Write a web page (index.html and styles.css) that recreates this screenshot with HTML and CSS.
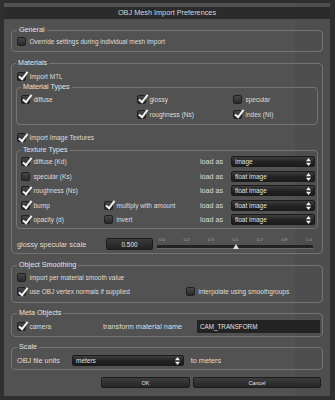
FILE: index.html
```html
<!DOCTYPE html>
<html>
<head>
<meta charset="utf-8">
<title>OBJ Mesh Import Preferences</title>
<link rel="stylesheet" href="styles.css">
</head>
<body>
<div class="dialog">
  <div class="titlebar">OBJ Mesh Import Preferences</div>
  <div class="content">
    <fieldset class="group g-general">
      <legend>General</legend>
      <div class="row"><span class="cb"><span class="box"></span>Override settings during individual mesh import</span></div>
    </fieldset>

    <fieldset class="group g-materials">
      <legend>Materials</legend>
      <div class="row inset"><span class="cb"><span class="box on"></span>Import MTL</span></div>
      <fieldset class="group sub g-mattypes">
        <legend>Material Types</legend>
        <div class="mt-grid">
          <span class="cb"><span class="box on"></span>diffuse</span>
          <span class="cb"><span class="box on"></span>glossy</span>
          <span class="cb"><span class="box"></span>specular</span>
          <span></span>
          <span class="cb"><span class="box on"></span>roughness (Ns)</span>
          <span class="cb"><span class="box on"></span>index (Ni)</span>
        </div>
      </fieldset>
      <div class="row inset import-tex"><span class="cb"><span class="box on"></span>Import Image Textures</span></div>
      <fieldset class="group sub g-textypes">
        <legend>Texture Types</legend>
        <div class="tx-row">
          <span class="cb"><span class="box on"></span>diffuse (Kd)</span><span></span>
          <span class="loadas">load as</span>
          <span class="dd">image<svg class="arr" viewBox="0 0 5 8"><polygon points="0,3.3 2.5,0 5,3.3"/><polygon points="0,4.7 2.5,8 5,4.7"/></svg></span>
        </div>
        <div class="tx-row">
          <span class="cb"><span class="box"></span>specular (Ks)</span><span></span>
          <span class="loadas">load as</span>
          <span class="dd">float image<svg class="arr" viewBox="0 0 5 8"><polygon points="0,3.3 2.5,0 5,3.3"/><polygon points="0,4.7 2.5,8 5,4.7"/></svg></span>
        </div>
        <div class="tx-row">
          <span class="cb"><span class="box on"></span>roughness (Ns)</span><span></span>
          <span class="loadas">load as</span>
          <span class="dd">float image<svg class="arr" viewBox="0 0 5 8"><polygon points="0,3.3 2.5,0 5,3.3"/><polygon points="0,4.7 2.5,8 5,4.7"/></svg></span>
        </div>
        <div class="tx-row">
          <span class="cb"><span class="box on"></span>bump</span>
          <span class="cb"><span class="box on"></span>multiply with amount</span>
          <span class="loadas">load as</span>
          <span class="dd">float image<svg class="arr" viewBox="0 0 5 8"><polygon points="0,3.3 2.5,0 5,3.3"/><polygon points="0,4.7 2.5,8 5,4.7"/></svg></span>
        </div>
        <div class="tx-row">
          <span class="cb"><span class="box on"></span>opacity (d)</span>
          <span class="cb"><span class="box"></span>invert</span>
          <span class="loadas">load as</span>
          <span class="dd">float image<svg class="arr" viewBox="0 0 5 8"><polygon points="0,3.3 2.5,0 5,3.3"/><polygon points="0,4.7 2.5,8 5,4.7"/></svg></span>
        </div>
      </fieldset>
      <div class="row inset scale-row">
        <span class="big-lbl scale-lbl">glossy specular scale</span>
        <span class="spin">0.500</span>
        <span class="slider">
          <span class="ticks"><span>0.0</span><span>0.2</span><span>0.3</span><span>0.5</span><span>0.7</span><span>0.8</span><span>1.0</span></span>
          <span class="track"></span>
          <span class="handle"></span>
        </span>
      </div>
    </fieldset>

    <fieldset class="group g-smooth">
      <legend>Object Smoothing</legend>
      <div class="sm-grid">
        <span class="cb"><span class="box"></span>import per material smooth value</span>
        <span></span>
        <span class="cb"><span class="box on"></span>use OBJ vertex normals if supplied</span>
        <span class="cb"><span class="box"></span>interpolate using smoothgroups</span>
      </div>
    </fieldset>

    <fieldset class="group g-meta">
      <legend>Meta Objects</legend>
      <div class="meta-grid">
        <span class="cb"><span class="box on"></span>camera</span>
        <span class="big-lbl">transform material name</span>
        <span class="field">CAM_TRANSFORM</span>
      </div>
    </fieldset>

    <fieldset class="group g-scale">
      <legend>Scale</legend>
      <div class="row">
        <span class="big-lbl units-lbl">OBJ file units</span>
        <span class="dd dd-units">meters<svg class="arr" viewBox="0 0 5 8"><polygon points="0,3.3 2.5,0 5,3.3"/><polygon points="0,4.7 2.5,8 5,4.7"/></svg></span>
        <span class="big-lbl">to meters</span>
      </div>
    </fieldset>

    <div class="buttons">
      <span class="btn btn-ok">OK</span>
      <span class="btn btn-cancel">Cancel</span>
    </div>
  </div>
</div>
</body>
</html>
```

FILE: styles.css
```css
* { box-sizing: border-box; }
html, body { margin: 0; padding: 0; }
body {
  width: 335px;
  height: 400px;
  overflow: hidden;
  background: #2f2f2f;
  font-family: "Liberation Sans", Arial, sans-serif;
  color: #dcdcdc;
}
.dialog {
  margin: 3px 0 0 4px;
  width: 326px;
  height: 393px;
  padding-top: 4px;
  background: linear-gradient(to right, #525252 0, #525252 291px, #4e4e4e 291px);
}
.titlebar {
  height: 12px;
  line-height: 12px;
  background: #2b2b2b;
  color: #d6d6d6;
  font-size: 7.3px;
  text-align: center;
}
.content { padding: 7px 7px 0; }

.group {
  margin: 0;
  min-width: 0;
  border: 1px solid #747474;
  border-radius: 4px;
}
.group > legend {
  padding: 0 2px;
  font-size: 7.2px;
  line-height: 8px;
  color: #e4e4e4;
}
.row { height: 14px; display: flex; align-items: center; }
.inset { padding-left: 1px; }

.cb {
  display: flex;
  align-items: center;
  font-size: 6.5px;
  white-space: nowrap;
  color: #dedede;
}
.box {
  position: relative;
  flex: none;
  width: 9px;
  height: 9px;
  margin-right: 3.5px;
  border: 1px solid #202020;
  border-radius: 2px;
  background: linear-gradient(#474747, #2a2a2a);
}
.box.on::after {
  content: "";
  position: absolute;
  left: 2.5px;
  top: -2.5px;
  width: 3px;
  height: 7.5px;
  border: solid #f2f2f2;
  border-width: 0 2px 2px 0;
  transform: rotate(38deg);
}
.big-lbl { font-size: 7.3px; white-space: nowrap; color: #dcdcdc; }

.g-general { padding: 0 5px 3px; }
.g-materials { margin-top: 7px; padding: 2px 4px 2px; }
.g-mattypes { padding: 0.5px 0 2px 4px; }
.mt-grid {
  display: grid;
  grid-template-columns: 116px 96px auto;
  grid-auto-rows: 15px;
  align-items: center;
}
.import-tex { margin-top: 6px; }
.g-textypes { margin-top: 1.5px; padding: 0.5px 2px 1px 4px; }
.tx-row {
  display: grid;
  grid-template-columns: 83px 96px 31px 84px;
  height: 14.5px;
  align-items: center;
}
.loadas { font-size: 7.2px; color: #dcdcdc; }
.dd {
  position: relative;
  display: flex;
  align-items: center;
  height: 11px;
  padding-left: 3px;
  border: 1px solid #1b1b1b;
  border-radius: 2px;
  background: linear-gradient(#3e3e3e, #222 55%, #1c1c1c);
  font-size: 6.5px;
  color: #e0e0e0;
  white-space: nowrap;
}
.arr {
  position: absolute;
  right: 3px;
  top: 1px;
  width: 5px;
  height: 8px;
  fill: #f0f0f0;
}
.scale-row { margin-top: 8.3px; }
.scale-lbl { width: 89px; }
.spin {
  width: 47px;
  height: 12px;
  line-height: 11px;
  text-align: center;
  font-size: 6.4px;
  color: #e6e6e6;
  border: 1px solid #1b1b1b;
  border-radius: 2px;
  background: linear-gradient(#3a3a3a, #232323);
}
.slider {
  position: relative;
  display: block;
  width: 156px;
  height: 14px;
  margin-left: 4px;
}
.ticks {
  display: flex;
  justify-content: space-between;
  padding: 0 1px 0 2px;
  height: 6px;
  line-height: 6px;
  font-size: 4.3px;
  color: #a8a8a8;
}
.track {
  display: block;
  margin-top: 1.7px;
  height: 4px;
  background: #222;
  border-bottom: 1px solid #6c6c6c;
}
.handle {
  position: absolute;
  left: 75.5px;
  top: 6.7px;
  width: 0;
  height: 0;
  border-left: 3.5px solid transparent;
  border-right: 3.5px solid transparent;
  border-bottom: 5.5px solid #dedede;
}

.g-smooth { margin-top: 7px; padding: 1.5px 5px 3px; }
.sm-grid {
  display: grid;
  grid-template-columns: 169px auto;
  grid-auto-rows: 14px;
  align-items: center;
}
.g-meta { margin-top: 6.5px; padding: 2px 2px 3px 5px; }
.meta-grid {
  display: grid;
  grid-template-columns: 86px 94px 123px;
  height: 14px;
  align-items: center;
}
.field {
  height: 13px;
  line-height: 13px;
  padding-left: 3px;
  background: #232323;
  font-size: 6.3px;
  color: #e2e2e2;
}
.g-scale { margin-top: 6px; padding: 2px 5px 1.5px; }
.units-lbl { width: 55px; }
.dd-units { width: 112px; height: 10.5px; margin-right: 6.7px; }

.buttons {
  display: flex;
  justify-content: flex-end;
  gap: 3px;
  margin-top: 7px;
  padding-right: 2px;
}
.btn {
  height: 11.5px;
  line-height: 10px;
  text-align: center;
  font-size: 5.5px;
  color: #e0e0e0;
  border: 1px solid #1c1c1c;
  border-radius: 2px;
  background: linear-gradient(#3d3d3d, #262626);
}
.btn-ok { width: 89px; }
.btn-cancel { width: 128px; }
```
